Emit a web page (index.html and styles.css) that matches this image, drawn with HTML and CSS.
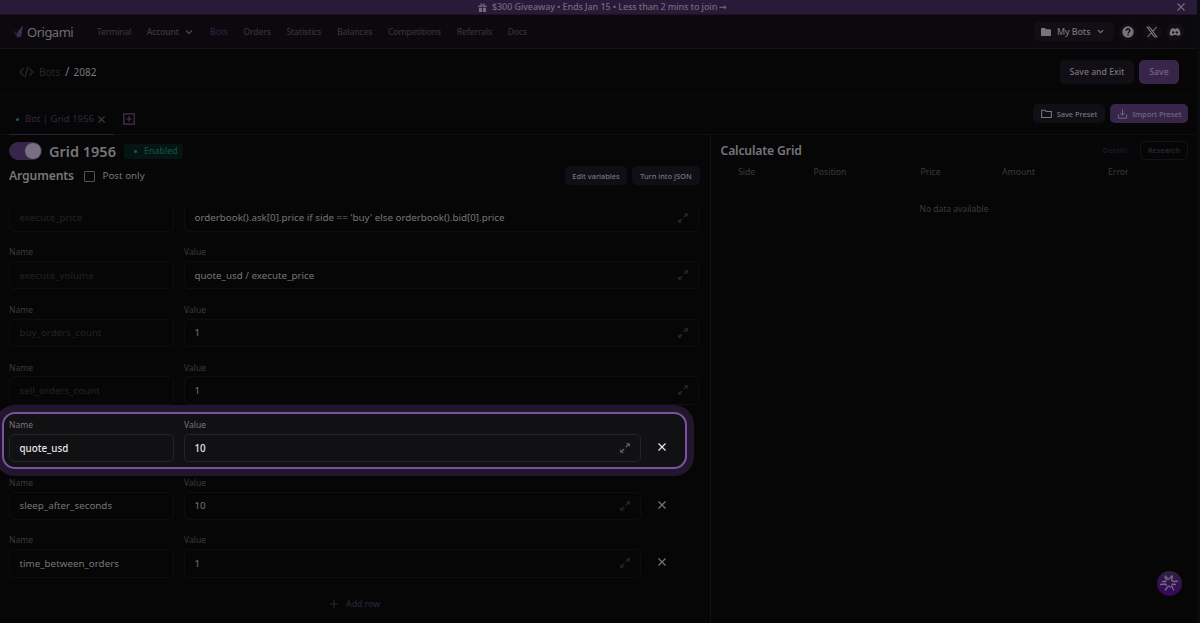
FILE: index.html
```html
<!DOCTYPE html>
<html lang="en">
<head>
<meta charset="utf-8">
<title>Origami – Bots</title>
<link rel="stylesheet" href="styles.css">
</head>
<body>
<svg class="defs" width="0" height="0">
  <symbol id="x" viewBox="0 0 10 10"><path d="M1.500 1.500l7 7M8.500 1.500l-7 7" fill="none" stroke="currentColor" stroke-width="1.200"/></symbol>
  <symbol id="chev" viewBox="0 0 8 8"><path d="M1.700 2.800L4 5.100l2.300-2.300" fill="none" stroke="currentColor" stroke-width="1"/></symbol>
  <symbol id="expand" viewBox="0 0 12 12"><path d="M3 9l2.200-2.200M6.800 5.200L9 3" fill="none" stroke="currentColor" stroke-width="1.200"/><path d="M7 1.200h3.800V5zM1.200 7v3.800H5z" fill="currentColor"/></symbol>
</svg>
<div class="banner">
  <svg class="gift" viewBox="0 0 10 10"><path d="M.5 2.700h4v2.100h-4zM5.500 2.700h4v2.100h-4zM1 5.500h3.500V10H1zM5.500 5.500H9V10H5.500z" fill="currentColor"/><path d="M5 2.500C3.500 2.700 2.500 2 2.800 1.200S4.600.8 5 2.500C5.400.8 6.900.4 7.200 1.200S6.500 2.700 5 2.500" fill="none" stroke="currentColor"/></svg>
  <span class="banner-text">$300 Giveaway • Ends Jan 15 • Less than 2 mins to join <span class="arrow">→</span></span>
  <svg class="banner-close"><use href="#x"/></svg>
</div>
<header class="nav">
  <svg class="logo" viewBox="0 0 12 14"><path d="M11 0L4.500 8 4 13.500l5-1z" fill="#3d2c55"/><path d="M0 5.500l4 3.500v4z" fill="#2a2035"/></svg>
  <span class="brand">Origami</span>
  <nav class="links">
    <a>Terminal</a><a class="account">Account<svg><use href="#chev"/></svg></a><a class="active">Bots</a><a>Orders</a><a>Statistics</a><a>Balances</a><a>Competitions</a><a>Referrals</a><a>Docs</a>
  </nav>
  <div class="tools">
    <div class="mybots"><svg class="folder" viewBox="0 0 10 8"><path d="M0 .8Q0 0 .8 0H4l1 1.200h4.200q.8 0 .8.800v5.200q0 .8-.8.800H.8Q0 8 0 7.200z" fill="currentColor"/></svg><span>My Bots</span><svg class="chev"><use href="#chev"/></svg></div>
    <div class="round"><svg viewBox="0 0 12 12"><circle cx="6" cy="6" r="5.700" fill="currentColor"/><path d="M4.200 4.700C4.200 2.300 7.900 2.400 7.900 4.600 7.900 6 6.100 5.900 6.100 7.300M6.100 8.200v1.300" fill="none" stroke="#0f0d13" stroke-width="1.400"/></svg></div>
    <div class="round"><svg viewBox="0 0 12 12"><path d="M1.300 1.300h2.400l7 9.400H8.300zM10.600 1L6.800 5.300M5.100 7L1.500 11" fill="none" stroke="currentColor" stroke-width="1.100"/></svg></div>
    <div class="round"><svg viewBox="0 0 12 12"><path fill-rule="evenodd" d="M4.300 2L2.200 2.700C1 4.600.5 6.500.6 8.700q1.300 1 2.700 1.300l.7-1.100h4l.7 1.100q1.500-.4 2.700-1.300c.1-2.200-.4-4.100-1.600-6L7.700 2l-.4.800H4.700zM4.200 5.200a1.100 1.200 0 1 0 .01 0zM7.800 5.200a1.100 1.200 0 1 0 .01 0z" fill="currentColor"/></svg></div>
  </div>
</header>
<section class="crumbs">
  <svg class="code" viewBox="0 0 15 12"><path d="M4.500 2.500L1 6l3.500 3.500M10.500 2.500L14 6l-3.500 3.500M9 .5l-3 11" fill="none" stroke="currentColor" stroke-width="1.100"/></svg>
  <span class="crumb-bots">Bots</span><span class="slash">/</span><span class="crumb-id">2082</span>
  <div class="crumb-actions"><button class="btn save-exit">Save and Exit</button><button class="btn primary save">Save</button></div>
</section>
<section class="tabs">
  <div class="tab"><i class="dot"></i><span>Bot | Grid 1956</span><svg><use href="#x"/></svg></div>
  <svg class="add-tab" viewBox="0 0 12 12"><path d="M.8.800h10.400v10.400H.8zM6 3.200v5.600M3.200 6h5.600" fill="none" stroke="currentColor" stroke-width="1.200"/></svg>
  <div class="presets">
    <button class="btn small save-preset"><svg viewBox="0 0 12 10"><path d="M.7 8.800V.9h3.700l1.200 1.300h5.700v6.600z" fill="none" stroke="currentColor" stroke-width="1.200"/></svg>Save Preset</button>
    <button class="btn small primary import"><svg viewBox="0 0 12 12"><path d="M6 .5v6.700M3.400 4.800L6 7.400l2.600-2.600M1 6.500V11h10V6.500" fill="none" stroke="currentColor" stroke-width="1.200"/></svg>Import Preset</button>
  </div>
</section>
<main class="content">
  <section class="left">
    <div class="titlebar"><span class="toggle"><i></i></span><h1>Grid 1956</h1><span class="badge"><i class="dot"></i>Enabled</span></div>
    <div class="argbar"><h2>Arguments</h2><i class="checkbox"></i><span class="post">Post only</span>
      <div class="argbtns"><button class="btn small edit">Edit variables</button><button class="btn small json">Turn into JSON</button></div></div>
    <div class="rows">
      <div class="row fixed"><div class="input name">execute_price</div><div class="input value"><span class="t-order">orderbook().ask[0].price if side == 'buy' else orderbook().bid[0].price</span><svg><use href="#expand"/></svg></div></div>
      <div class="row fixed"><label>Name</label><label class="val">Value</label><div class="input name">execute_volume</div><div class="input value"><span>quote_usd / execute_price</span><svg><use href="#expand"/></svg></div></div>
      <div class="row fixed"><label>Name</label><label class="val">Value</label><div class="input name">buy_orders_count</div><div class="input value"><span>1</span><svg><use href="#expand"/></svg></div></div>
      <div class="row fixed"><label>Name</label><label class="val">Value</label><div class="input name">sell_orders_count</div><div class="input value"><span>1</span><svg><use href="#expand"/></svg></div></div>
      <div class="row spot"><label>Name</label><label class="val">Value</label><div class="input name">quote_usd</div><div class="input value"><span>10</span><svg><use href="#expand"/></svg></div><svg class="remove"><use href="#x"/></svg></div>
      <div class="row"><label>Name</label><label class="val">Value</label><div class="input name">sleep_after_seconds</div><div class="input value"><span>10</span><svg><use href="#expand"/></svg></div><svg class="remove"><use href="#x"/></svg></div>
      <div class="row"><label>Name</label><label class="val">Value</label><div class="input name">time_between_orders</div><div class="input value"><span>1</span><svg><use href="#expand"/></svg></div><svg class="remove"><use href="#x"/></svg></div>
    </div>
    <div class="addrow"><svg viewBox="0 0 8 8"><path d="M4 0v8M0 4h8" stroke="currentColor"/></svg><span>Add row</span></div>
  </section>
  <section class="right">
    <div class="calc"><h2>Calculate Grid</h2><button class="btn small details">Details</button><button class="btn small research">Research</button></div>
    <div class="thead"><span>Side</span><span>Position</span><span>Price</span><span>Amount</span><span>Error</span></div>
    <p class="empty">No data available</p>
  </section>
</main>
<div class="fab"><svg viewBox="0 0 20 20"><path d="M6.500 2.500L9 6.500M9 6.500l1.500-1L13.500 2.500M13.500 2.500l-1 4.500 1.500 1.500M14 8.500l5-.3M17 11.500l-3.500-.3-.8 1.800M12.700 13l2.300 4.500M12 14.500l-2-1.500-1.500 1M8.500 14L6 17.500M7.500 13l-.8-2M6.700 11L1 11.500M3 8.500l3.500.2L7.500 7M7.500 7L5.500 3.500" fill="none" stroke="currentColor" stroke-width="1.300"/></svg></div>
</body>
</html>
```
FILE: styles.css
```css
*, *::before { box-sizing: border-box; }
body { margin: 0; width: 1200px; height: 623px; overflow: hidden; background: #060607; color: #77757b; font: 9.3px/12px "Noto Sans", sans-serif; display: flex; flex-direction: column; border-right: 3px solid #0b0a0e; white-space: nowrap; }
svg { display: block; flex: none; }
.defs { position: absolute; }
h1, h2, p { margin: 0; }
button { font: inherit; }

.banner { height: 15px; flex: none; margin-right: -3px; background: #291a38; border-bottom: 1px solid #1b1225; color: #75687f; display: flex; align-items: center; padding: 0 14px 0 478px; font-weight: 500; }
.gift { width: 9px; height: 9px; margin-right: 5px; }
.banner-text { font-size: 9px; letter-spacing: -.1px; }
.arrow { font-family: "DejaVu Sans", sans-serif; font-size: 6px; font-size: 9.500px; line-height: 10px; margin-left: -1px; }
.banner-close { width: 10px; height: 10px; margin-left: auto; color: #75687f; }

.nav { height: 34px; flex: none; background: #0b090e; border-bottom: 1px solid #131216; display: flex; align-items: center; padding-left: 13px; }
.logo { width: 11px; height: 13px; }
.brand { margin-left: 3px; width: 70px; font-size: 13px; letter-spacing: -.5px; color: #706e75; }
.links { display: flex; gap: 15.750px; color: #343238; font-size: 8.600px; letter-spacing: -.18px; font-weight: 500; }
.links a.active { color: #30213d; }
.links .account { display: flex; align-items: center; color: #3b393e; margin-left: -.5px; }
.account svg { width: 10px; height: 10px; margin-left: 5.500px; color: #4a484e; }
.tools { display: flex; align-items: center; gap: 5.500px; margin-left: auto; padding-right: 13px; color: #77757b; }
.mybots { width: 80px; height: 19px; border-radius: 5px; background: #110f15; display: flex; align-items: center; padding-left: 7.500px; font-weight: 500; font-size: 8.900px; letter-spacing: -.1px; }
.folder { width: 10px; height: 8px; margin-right: 6px; }
.mybots span { width: 39px; }
.mybots .chev { width: 9px; height: 9px; }
.round { width: 18px; height: 18px; border-radius: 50%; background: #110f15; display: flex; align-items: center; justify-content: center; }
.round svg { width: 12px; height: 12px; }

.crumbs { height: 46px; flex: none; border-bottom: 1px solid #0c0b0e; display: flex; align-items: center; padding-left: 19px; font-size: 10px; }
.code { width: 15px; height: 12px; color: #2d2931; margin-right: 5px; }
.crumb-bots { width: 26px; color: #29232d; }
.slash { width: 8.500px; font-size: 12px; }
.crumb-actions { margin-left: auto; display: flex; gap: 5px; padding-right: 18px; }
.btn { border: 0; padding: 0; height: 24px; border-radius: 5px; background: #110f15; color: #77757b; font-size: 8.700px; font-weight: 500; display: flex; align-items: center; justify-content: center; }
.btn.small { height: 19px; font-size: 7.400px; }
.btn.primary { background: #38264a; color: #756880; }
.save-exit { width: 74px; }
.save { width: 40px; }

.tabs { height: 40px; flex: none; border-bottom: 1px solid #0f0e12; display: flex; padding-left: 9px; align-items: flex-end; color: #35263f; }
.tab { width: 105px; height: 30px; display: flex; align-items: center; padding-left: 7px; border-bottom: 1px solid #2d203a; font-size: 9.500px; margin-bottom: -.5px; }
.dot { width: 3px; height: 3px; border-radius: 50%; background: #17614f; margin-right: 6px; }
.tab span { width: 72px; }
.tab svg { width: 9px; height: 9px; color: #47384f; }
.add-tab { width: 12px; height: 12px; margin: 0 0 9px 9px; color: #4a3358; }
.presets { margin-left: auto; display: flex; gap: 5px; padding-right: 9px; margin-bottom: 11px; }
.presets svg { width: 11px; height: 10px; margin-right: 5px; }
.save-preset { width: 72px; }
.import { width: 78px; }

.content { flex: 1; min-height: 0; display: flex; }
.left { width: 711px; border-right: 1px solid #111014; display: flex; flex-direction: column; }
.titlebar { height: 28px; margin-top: 2px; display: flex; align-items: center; padding-left: 9px; }
.toggle { width: 33px; height: 18px; border-radius: 9px; background: #38264a; display: flex; justify-content: flex-end; padding: 1px; }
.toggle i { width: 16px; height: 16px; border-radius: 50%; background: #767080; }
h1 { margin-left: 7px; width: 75px; font-size: 14.500px; line-height: 20px; font-weight: 600; color: #77757b; }
.badge { width: 59px; height: 15px; border-radius: 3px; background: #051514; color: #154f41; display: flex; align-items: center; padding-left: 10px; font-size: 8.800px; font-weight: 500; }
.badge .dot { margin-right: 7px; background: #15604c; }
.argbar { height: 22px; display: flex; align-items: center; padding: 0 10px 0 9px; }
h2 { font-size: 12.200px; line-height: 16px; font-weight: 600; letter-spacing: -.15px; color: #77757b; }
.argbar h2 { width: 75px; }
.checkbox { width: 11px; height: 11px; border: 1px solid #55535a; border-radius: 1px; margin-right: 7.500px; }
.post { font-size: 9.800px; }
.argbtns { margin-left: auto; display: flex; gap: 5px; padding-bottom: 1px; }
.edit { width: 62px; }
.json { width: 68px; }

.rows { margin-top: 21px; height: 375px; overflow: hidden; position: relative; }
.row { height: 57.650px; padding-left: 9px; display: grid; grid-template-columns: 165px 457px 42px; grid-template-rows: 12px 28.500px; column-gap: 10px; row-gap: 3px; position: relative; }
.row:first-child { margin-top: -19.700px; }
.row.fixed { grid-template-columns: 165px 515px; }
label { font-size: 8.500px; color: #3c3a40; padding-top: .3px; }
.val { grid-column: 2; }
.input { grid-row: 2; border: 1px solid #0e0d10; border-radius: 5px; display: flex; align-items: center; padding: 0 9.500px; font-size: 9.800px; }
.name { grid-column: 1; }
.value { grid-column: 2; }
.input.name { padding-top: 1px; }
.fixed .name { color: #232227; }
.input.value span { padding-top: 1px; }
.input svg { width: 12px; height: 12px; margin-left: auto; color: #29282c; }
.input .t-order { letter-spacing: -.005px; }
.remove { grid-column: 3; grid-row: 2; align-self: center; width: 10px; height: 10px; margin: 0 0 2px 6px; color: #77757b; }
.spot { z-index: 1; }
.spot::before { content: ""; position: absolute; z-index: -1; left: 2px; top: -7px; width: 685px; height: 57px; border: 2px solid #79539d; border-radius: 13px; background: #111013; box-shadow: 0 0 0 7px #22162f; }
.spot label { color: #77757b; }
.spot .input { border-color: #242326; color: #e8e7e9; font-weight: 500; }
.spot .input svg { color: #626166; }
.spot .remove { color: #e8e7e9; }
.addrow { display: flex; align-items: center; height: 14px; margin-top: 14px; padding-left: 330px; color: #2e203a; font-size: 8.600px; font-weight: 500; }
.addrow svg { width: 8px; height: 8px; margin-right: 8px; }

.right { flex: 1; padding-left: 9.500px; }
.calc { display: flex; align-items: center; height: 30px; padding-right: 9px; }
.calc h2 { margin-right: auto; padding-top: 1px; }
.details { width: 40px; background: #070609; color: #201a27; margin-right: 5px; }
.research { width: 48px; background: none; border: 1px solid #15131a; color: #302639; }
.thead { display: grid; grid-template-columns: 75.500px 107px 81.500px 106px 1fr; padding-left: 17.500px; height: 13px; font-size: 8.700px; color: #3b393e; align-items: center; }
.empty { margin-top: 25px; padding-right: 9.500px; text-align: center; font-size: 8.500px; color: #3b393e; }
.fab { position: absolute; left: 1156.500px; top: 570.500px; width: 25px; height: 25px; border-radius: 50%; background: linear-gradient(#30213e, #34075b); color: #76688a; display: flex; align-items: center; justify-content: center; }
.fab svg { width: 20px; height: 20px; }
```
